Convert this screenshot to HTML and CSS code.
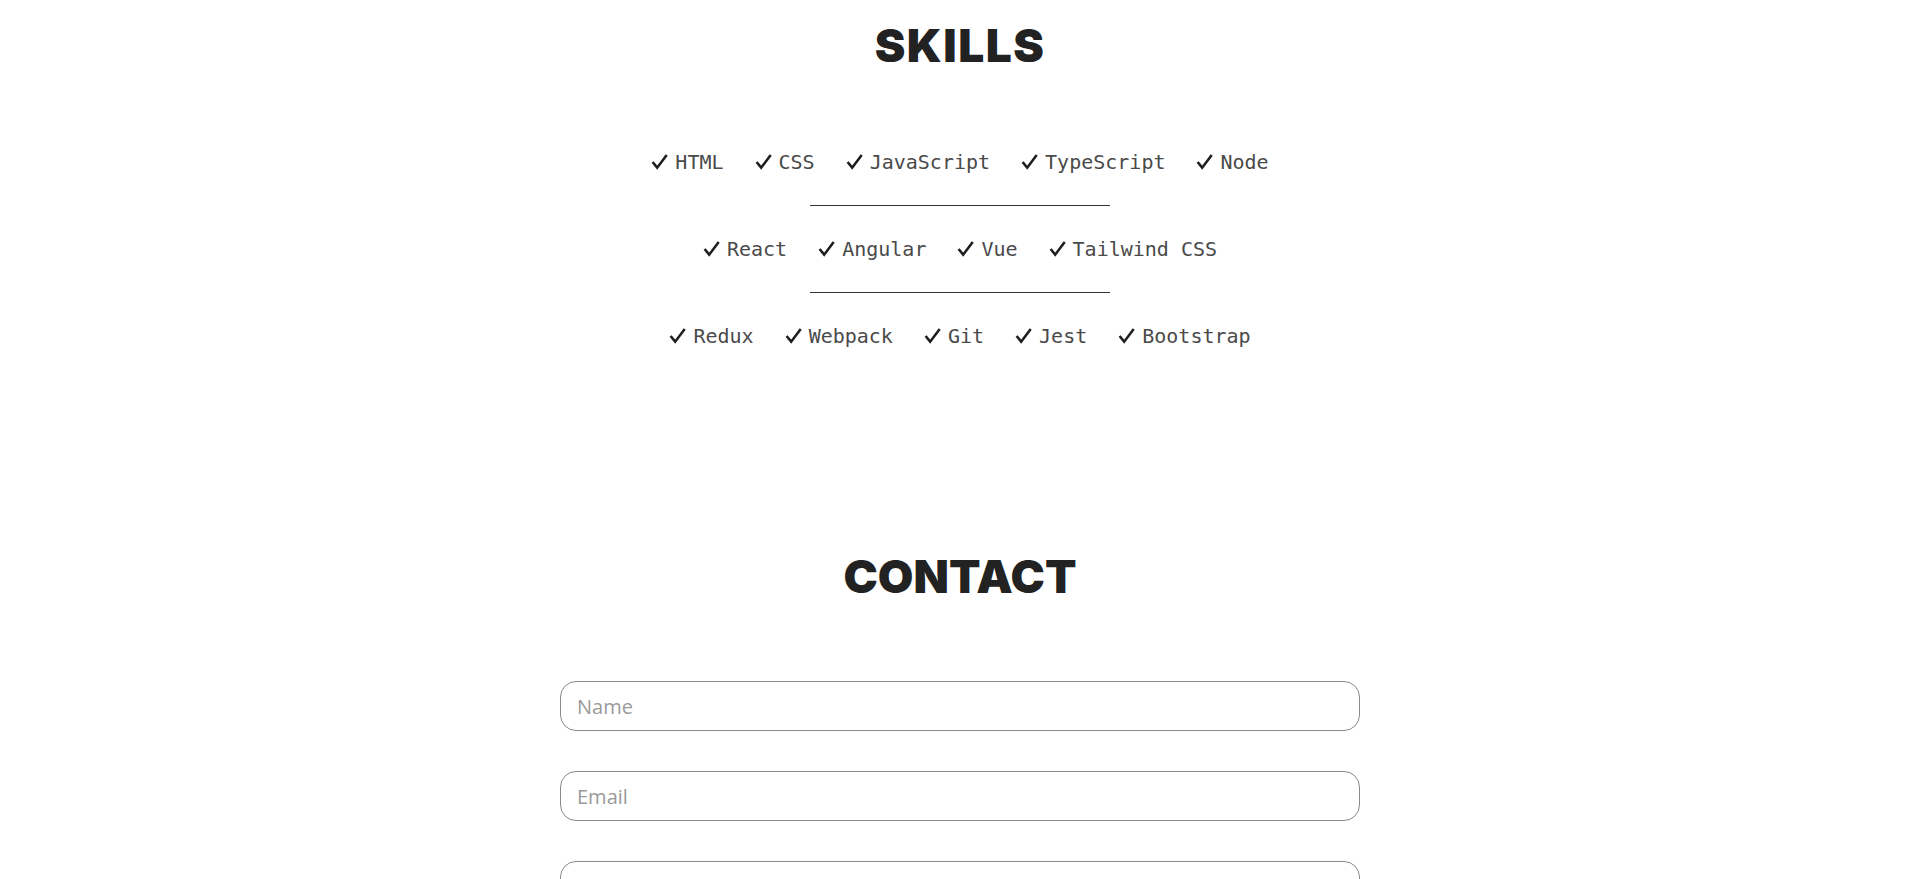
FILE: index.html
```html
<!DOCTYPE html>
<html lang="en">
<head>
<meta charset="utf-8">
<title>Skills &amp; Contact</title>
<link rel="stylesheet" href="styles.css">
</head>
<body>
<section class="skills">
  <h2 class="section-title">SKILLS</h2>
  <div class="skill-rows">
    <ul class="skill-row">
      <li class="skill"><svg class="check" viewBox="0 0 16 16"><path d="M1.5 8.5 L5.8 13.8 L14.8 1.8"/></svg><span>HTML</span></li>
      <li class="skill"><svg class="check" viewBox="0 0 16 16"><path d="M1.5 8.5 L5.8 13.8 L14.8 1.8"/></svg><span>CSS</span></li>
      <li class="skill"><svg class="check" viewBox="0 0 16 16"><path d="M1.5 8.5 L5.8 13.8 L14.8 1.8"/></svg><span>JavaScript</span></li>
      <li class="skill"><svg class="check" viewBox="0 0 16 16"><path d="M1.5 8.5 L5.8 13.8 L14.8 1.8"/></svg><span>TypeScript</span></li>
      <li class="skill"><svg class="check" viewBox="0 0 16 16"><path d="M1.5 8.5 L5.8 13.8 L14.8 1.8"/></svg><span>Node</span></li>
    </ul>
    <hr class="divider">
    <ul class="skill-row">
      <li class="skill"><svg class="check" viewBox="0 0 16 16"><path d="M1.5 8.5 L5.8 13.8 L14.8 1.8"/></svg><span>React</span></li>
      <li class="skill"><svg class="check" viewBox="0 0 16 16"><path d="M1.5 8.5 L5.8 13.8 L14.8 1.8"/></svg><span>Angular</span></li>
      <li class="skill"><svg class="check" viewBox="0 0 16 16"><path d="M1.5 8.5 L5.8 13.8 L14.8 1.8"/></svg><span>Vue</span></li>
      <li class="skill"><svg class="check" viewBox="0 0 16 16"><path d="M1.5 8.5 L5.8 13.8 L14.8 1.8"/></svg><span>Tailwind CSS</span></li>
    </ul>
    <hr class="divider">
    <ul class="skill-row">
      <li class="skill"><svg class="check" viewBox="0 0 16 16"><path d="M1.5 8.5 L5.8 13.8 L14.8 1.8"/></svg><span>Redux</span></li>
      <li class="skill"><svg class="check" viewBox="0 0 16 16"><path d="M1.5 8.5 L5.8 13.8 L14.8 1.8"/></svg><span>Webpack</span></li>
      <li class="skill"><svg class="check" viewBox="0 0 16 16"><path d="M1.5 8.5 L5.8 13.8 L14.8 1.8"/></svg><span>Git</span></li>
      <li class="skill"><svg class="check" viewBox="0 0 16 16"><path d="M1.5 8.5 L5.8 13.8 L14.8 1.8"/></svg><span>Jest</span></li>
      <li class="skill"><svg class="check" viewBox="0 0 16 16"><path d="M1.5 8.5 L5.8 13.8 L14.8 1.8"/></svg><span>Bootstrap</span></li>
    </ul>
  </div>
</section>
<section class="contact">
  <h2 class="section-title">CONTACT</h2>
  <form class="contact-form">
    <input class="field" type="text" placeholder="Name">
    <input class="field" type="email" placeholder="Email">
    <textarea class="field field-message" placeholder="Message"></textarea>
  </form>
</section>
</body>
</html>
```

FILE: styles.css
```css
* { box-sizing: border-box; }

html, body {
  margin: 0;
  padding: 0;
  background: #ffffff;
  color: #222222;
}

body {
  font-family: "Open Sans", "Noto Sans", sans-serif;
}

.section-title {
  margin: 0;
  font-family: Inter, "DejaVu Sans", sans-serif;
  font-weight: 900;
  font-size: 46px;
  line-height: 46px;
  text-align: center;
  color: #222222;
}

.skills {
  padding-top: 22px;
}

.skills .section-title {
  margin-bottom: 51px;
  letter-spacing: 1.5px;
}

.skill-rows {
  display: flex;
  flex-direction: column;
  align-items: center;
}

.skill-row {
  list-style: none;
  margin: 0;
  padding: 30px 0;
  display: flex;
  justify-content: center;
  gap: 31px;
}

.skill {
  display: flex;
  align-items: center;
  gap: 7px;
  font-family: "DejaVu Sans Mono", "Liberation Mono", monospace;
  font-size: 20px;
  line-height: 26px;
  color: #4a4a4a;
}

.check {
  width: 17px;
  height: 17px;
  margin-top: -1px;
  fill: none;
  stroke: #1e1e1e;
  stroke-width: 2.4;
  stroke-linecap: butt;
  stroke-linejoin: miter;
}

.divider {
  width: 300px;
  margin: 0;
  border: 0;
  border-top: 1px solid #333333;
  height: 0;
}

.contact {
  padding-top: 174px;
}

.contact .section-title {
  margin-bottom: 82px;
}

.contact-form {
  width: 800px;
  margin: 0 auto;
  display: flex;
  flex-direction: column;
  gap: 40px;
}

.field {
  display: block;
  width: 100%;
  height: 50px;
  padding: 0 16px;
  border: 1px solid #8a8a8a;
  border-radius: 16px;
  background: #ffffff;
  font-family: "Open Sans", "Noto Sans", sans-serif;
  font-size: 20px;
  color: #222222;
  outline: none;
}

.field::placeholder {
  color: #9a9a9a;
}

.field-message {
  height: 150px;
  padding-top: 10px;
  resize: none;
}
```
